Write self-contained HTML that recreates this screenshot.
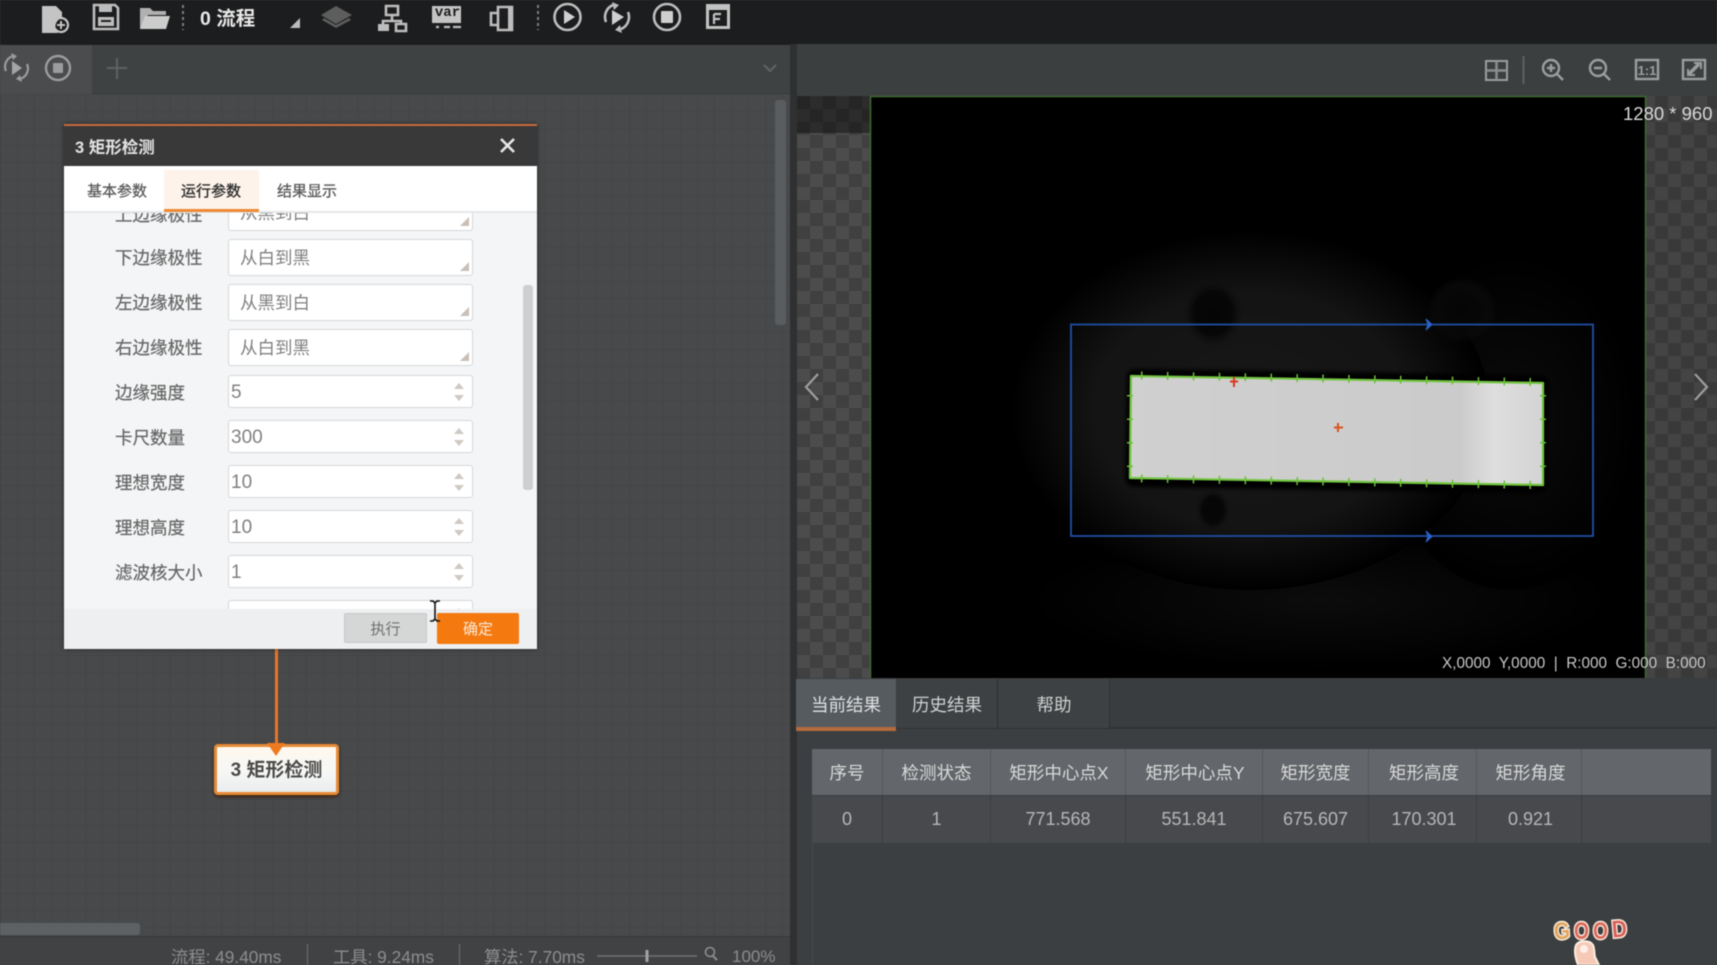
<!DOCTYPE html>
<html lang="zh"><head><meta charset="utf-8"><title>矩形检测</title>
<style>
*{box-sizing:border-box;margin:0;padding:0}
html,body{width:1717px;height:965px;overflow:hidden;background:#3c3f41}
body{font-family:"Liberation Sans","Noto Sans CJK SC",sans-serif;position:relative}
#root{position:absolute;left:0;top:0;width:1717px;height:965px;filter:blur(.5px);overflow:hidden}
.a{position:absolute;white-space:nowrap}
svg.a{overflow:visible}
.ic{fill:none;stroke:#bdbdbd;stroke-width:2.600}
.lb{left:115px;font-size:17.500px;line-height:24px;color:#666;width:90px;-webkit-text-stroke:.2px #666;margin-top:1px}
.inp{left:228px;width:245px;background:#fff;border:1px solid #d5d7d9;border-radius:3px;color:#808080;font-size:17.500px}
.sel{height:37px;padding:0 0 0 11px;line-height:36px}
.sel:after{content:"";position:absolute;right:3px;bottom:4px;width:0;height:0;border-left:9px solid transparent;border-bottom:9px solid #c9bfb8}
.sp{height:33px;padding-left:2px;line-height:34px;font-size:19px}
.sp:before,.sp:after{content:"";position:absolute;right:8px;width:0;height:0;border-left:5px solid transparent;border-right:5px solid transparent}
.sp:before{top:7px;border-bottom:6px solid #cfc9c4}
.sp:after{bottom:6px;border-top:6px solid #cfc9c4}
.th,.td{position:absolute;text-align:center;white-space:nowrap}
.th{top:749px;height:46px;line-height:48px;font-size:17.500px;color:#d9dadb;background:#63666a;border-right:1px solid #54575a}
.td{top:796px;height:47px;line-height:47px;font-size:18px;color:#b4b6b7;background:#47494c;border-right:1px solid #3d3f42}
.st{top:946px;font-size:17.300px;line-height:22px;color:#8b8d8e}
</style></head><body><div id="root">

<!-- left canvas -->
<div class="a" style="left:0;top:94px;width:790px;height:843px;background-color:#47494b;background-image:linear-gradient(#434547 1px,transparent 1px),linear-gradient(90deg,#434547 1px,transparent 1px);background-size:17px 17px"></div>

<!-- toolbar -->
<div class="a" style="left:0;top:0;width:1717px;height:44px;background:#1c1d1e;box-shadow:0 1px 2px #111"></div>
<svg class="a" style="left:0;top:0" width="800" height="44">
 <path d="M42 6h14l6 6v6a9 9 0 0 0-4 15H42z" fill="#c4c4c4"/><circle cx="61" cy="25" r="7" fill="none" stroke="#c4c4c4" stroke-width="2.200"/><path d="M57 25h8M61 21v8" stroke="#c4c4c4" stroke-width="2"/>
 <path d="M94 5h21l3 3v21H94z" class="ic"/><path d="M99 6h13v6H99z" fill="#bdbdbd"/><path d="M98 17h16v9H98z" fill="#bdbdbd"/><path d="M101 21h10" stroke="#222" stroke-width="2"/>
 <path d="M140 29V8h10l3 3h13v4h-18z" fill="#b0b0b0"/><path d="M145 16h25l-4 13h-26z" fill="#cccccc"/>
 <path d="M183 5v25M538 5v25" stroke="#7f7f7f" stroke-width="2" stroke-dasharray="3 3"/>
 <path d="M300 18v10h-10z" fill="#bcbcbc"/>
 <path d="M336 6l16 9-16 9-15-9z" fill="#5d5d5d"/><path d="M322 20l14 8 15-8-2-2-13 7-12-7z" fill="#5d5d5d"/>
 <path d="M386 6h12v9h-12zM392 15v6M383 24v-3h18v3" class="ic" stroke-width="2"/><path d="M378 24h11v7h-11z" fill="#bdbdbd"/><path d="M396 24h10v7h-10z" class="ic" stroke-width="2"/>
 <path d="M432 6h29v17h-29z" fill="#c4c4c4"/><path d="M436 27h3M444 27h6M453 27h8" stroke="#bdbdbd" stroke-width="2.200"/>
 <path d="M498 7h14v23h-14zM498 13h-7v12h7" class="ic"/><path d="M508 8h5v21h-5z" fill="#bdbdbd"/>
 <circle cx="567.500" cy="17" r="13" class="ic" stroke-width="3"/><path d="M564 10l11 7-11 7z" fill="#cfcfcf"/>
 <path d="M606 22a13 13 0 0 1 7-17M628 12a13 13 0 0 1-7 17" class="ic" stroke-width="3"/><path d="M612 2l7 3-5 5zM622 33l-7-3 5-5z" fill="#bdbdbd"/><path d="M612 10l12 7-12 8z" fill="#cfcfcf"/>
 <circle cx="667" cy="17" r="13" class="ic" stroke-width="3"/><rect x="661" y="11" width="12" height="12" rx="1" fill="#cfcfcf"/>
 <path d="M706 4h24v25h-24z" fill="#c2c2c2"/><path d="M709 10h18v16h-18z" fill="#1c1d1e"/><path d="M714 14h7M714 14v10M714 19h6" stroke="#c2c2c2" stroke-width="2.200" fill="none"/>
</svg>
<div class="a" style="left:200px;top:5px;font-size:19.500px;line-height:28px;font-weight:700;color:#e8e8e8">0 流程</div>
<div class="a" style="left:434px;top:5px;width:27px;text-align:center;font:700 14px/16px 'Liberation Mono',monospace;color:#1c1d1e">var</div>

<!-- left tab bar -->
<div class="a" style="left:0;top:45px;width:790px;height:49px;background:#3f4243;border-bottom:1px solid #383a3b"></div>
<div class="a" style="left:0;top:45px;width:92px;height:49px;background:#4a4c4d"></div>
<svg class="a" style="left:0;top:45px" width="790" height="49">
 <path d="M6 26a11 11 0 0 1 7-15M27 19a11 11 0 0 1-7 15" fill="none" stroke="#9a9c9d" stroke-width="2.200"/><path d="M11 8l6 3-4 4zM22 37l-6-3 4-4z" fill="#9a9c9d"/><path d="M12 16l10 7-10 7z" fill="#a3a5a6"/>
 <circle cx="58" cy="23" r="12" fill="none" stroke="#9a9c9d" stroke-width="2.400"/><rect x="53" y="18" width="10" height="10" rx="1" fill="#9a9c9d"/>
 <path d="M117 13v21M107 23h20" stroke="#5f6263" stroke-width="2"/>
 <path d="M764 20l6 6 6-6" fill="none" stroke="#606365" stroke-width="2"/>
</svg>

<!-- left scrollbars -->
<div class="a" style="left:775px;top:100px;width:11px;height:225px;background:#5a5d5f;border-radius:3px"></div>
<div class="a" style="left:0;top:923px;width:140px;height:12px;background:#5e6163;border-radius:0 3px 3px 0"></div>

<!-- connector & node -->
<div class="a" style="left:275px;top:648px;width:2.500px;height:100px;background:#e9762a"></div>
<div class="a" style="left:214px;top:744px;width:125px;height:51px;border:3px solid #e58a35;border-radius:4px;background:linear-gradient(#fff8ef,#f7f7f5 55%,#e9ecee);box-shadow:0 2px 3px rgba(60,25,0,.8);text-align:center;font-size:19px;line-height:47px;font-weight:700;color:#4a4a4a">3 矩形检测</div>
<svg class="a" style="left:267px;top:738px" width="18" height="18"><path d="M0 5h18l-9 13z" fill="#ee7a20"/></svg>

<!-- dialog -->
<div class="a" style="left:64px;top:124px;width:473px;height:525px;background:#f3f5f6;box-shadow:0 0 4px rgba(0,0,0,.5);overflow:hidden">
 <div class="a" style="left:0;top:0;width:473px;height:42px;background:#39393a;border-top:2px solid #c96a3a"></div>
 <div class="a" style="left:11px;top:12px;font-size:16.500px;line-height:24px;font-weight:700;color:#e4e4e4">3 矩形检测</div>
 <svg class="a" style="left:435px;top:13px" width="17" height="17"><path d="M2 2l13 13M15 2L2 15" stroke="#e6e6e6" stroke-width="2.600"/></svg>
 <div class="a" style="left:0;top:42px;width:473px;height:47px;background:#fff;border-bottom:2px solid #e6e7e8"></div>
 <div class="a" style="left:100px;top:46px;width:95px;height:42px;background:#fdf3ea;border-bottom:3px solid #ec8a35"></div>
 <div class="a" style="left:23px;top:57px;font-size:15px;line-height:21px;color:#5a5a5a;-webkit-text-stroke:.25px #5a5a5a">基本参数</div>
 <div class="a" style="left:117px;top:57px;font-size:15px;line-height:21px;color:#2e2e2e;-webkit-text-stroke:.35px #2e2e2e">运行参数</div>
 <div class="a" style="left:213px;top:57px;font-size:15px;line-height:21px;color:#5a5a5a;-webkit-text-stroke:.25px #5a5a5a">结果显示</div>
</div>

<!-- dialog content (clipped) -->
<div class="a" style="left:64px;top:213px;width:473px;height:396px;overflow:hidden;background:#f3f5f6">
 <div style="position:absolute;left:-64px;top:-213px;width:600px;height:700px">
  <div class="a lb" style="top:202px">上边缘极性</div><div class="a inp sel" style="top:194px">从黑到白</div>
  <div class="a lb" style="top:245px">下边缘极性</div><div class="a inp sel" style="top:239px">从白到黑</div>
  <div class="a lb" style="top:290px">左边缘极性</div><div class="a inp sel" style="top:284px">从黑到白</div>
  <div class="a lb" style="top:335px">右边缘极性</div><div class="a inp sel" style="top:329px">从白到黑</div>
  <div class="a lb" style="top:380px">边缘强度</div><div class="a inp sp" style="top:375px">5</div>
  <div class="a lb" style="top:425px">卡尺数量</div><div class="a inp sp" style="top:420px">300</div>
  <div class="a lb" style="top:470px">理想宽度</div><div class="a inp sp" style="top:465px">10</div>
  <div class="a lb" style="top:515px">理想高度</div><div class="a inp sp" style="top:510px">10</div>
  <div class="a lb" style="top:560px">滤波核大小</div><div class="a inp sp" style="top:555px">1</div>
  <div class="a inp sp" style="top:600px"></div>
 </div>
 <div class="a" style="left:459px;top:72px;width:10px;height:205px;background:#cdcfd0;border-radius:3px"></div>
</div>

<!-- dialog footer -->
<div class="a" style="left:64px;top:609px;width:473px;height:40px;background:#eeeff0"></div>
<div class="a" style="left:344px;top:613px;width:83px;height:30px;background:#d5d6d6;border:1px solid #c8c9c9;border-radius:2px;text-align:center;font-size:15px;line-height:31px;color:#6e6e6e">执行</div>
<div class="a" style="left:437px;top:613px;width:82px;height:31px;background:#f47a10;border-radius:2px;text-align:center;font-size:15px;line-height:33px;color:#fbe9d8">确定</div>
<svg class="a" style="left:428px;top:600px" width="14" height="22"><path d="M2 1h3l2 2 2-2h3M7 3v16M2 21h3l2-2 2 2h3" fill="none" stroke="#111" stroke-width="1.600"/></svg>

<!-- status bar -->
<div class="a" style="left:0;top:936px;width:790px;height:29px;background:#404244;border-top:1px solid #37393a"></div>
<div class="a st" style="left:171px">流程: 49.40ms</div>
<div class="a" style="left:307px;top:944px;width:1px;height:21px;background:#6f7172"></div>
<div class="a st" style="left:333px">工具: 9.24ms</div>
<div class="a" style="left:459px;top:944px;width:1px;height:21px;background:#6f7172"></div>
<div class="a st" style="left:484px">算法: 7.70ms</div>
<div class="a st" style="left:732px;font-size:17px">100%</div>
<svg class="a" style="left:595px;top:945px" width="135" height="20">
 <path d="M2 11h100" stroke="#6f7172" stroke-width="1.500"/><path d="M52 5v12" stroke="#a0a2a3" stroke-width="3"/>
 <circle cx="115" cy="7" r="4.500" fill="none" stroke="#8b8d8e" stroke-width="1.600"/><path d="M118 11l4 4" stroke="#8b8d8e" stroke-width="2"/>
</svg>

<!-- splitter & right base -->
<div class="a" style="left:790px;top:44px;width:7px;height:921px;background:#2e3031"></div>
<div class="a" style="left:797px;top:44px;width:920px;height:52px;background:#3c3f40"></div>
<svg class="a" style="left:1460px;top:44px" width="257" height="52">
 <g fill="none" stroke="#9c9e9e" stroke-width="2">
  <rect x="26" y="17" width="21" height="19"/><path d="M36.500 17v19M26 26.500h21" stroke="#8b8d8d" stroke-width="2.500"/>
  <path d="M63.500 12v28" stroke="#5e6061"/>
  <circle cx="91" cy="24" r="8" stroke-width="2.400"/><path d="M97 30l6 6" stroke-width="2.400"/><path d="M87 24h8M91 20v8" stroke-width="2.400"/>
  <circle cx="138" cy="24" r="8" stroke-width="2.400"/><path d="M144 30l6 6M134 24h8" stroke-width="2.400"/>
  <rect x="176" y="16" width="22" height="19" stroke-width="2.400"/>
  <rect x="223" y="16" width="22" height="19" stroke-width="2.400"/><path d="M229 30l10-10" stroke-width="3.500"/><path d="M234 19h7v6M228 25v6h7"/>
 </g>
 <text x="187" y="31" text-anchor="middle" font-family="Liberation Sans" font-size="13" font-weight="700" fill="#9c9e9e">1:1</text>
</svg>

<!-- checker -->
<div class="a" style="left:797px;top:96px;width:920px;height:582px;background-color:#404040;background-image:linear-gradient(45deg,#4c4c4c 25%,transparent 25%,transparent 75%,#4c4c4c 75%),linear-gradient(45deg,#4c4c4c 25%,transparent 25%,transparent 75%,#4c4c4c 75%);background-size:26px 26px;background-position:0 0,13px 13px"></div>
<div class="a" style="left:797px;top:96px;width:73px;height:37px;background:rgba(0,0,0,.42)"></div>
<div class="a" style="left:1645px;top:96px;width:72px;height:582px;background:rgba(0,0,0,.1)"></div>

<!-- image -->
<svg class="a" style="left:870px;top:96px" width="776" height="582" viewBox="870 96 776 582">
 <defs>
  <radialGradient id="r1"><stop offset="0" stop-color="#181818"/><stop offset=".65" stop-color="#141414"/><stop offset="1" stop-color="#000"/></radialGradient>
  <radialGradient id="r2"><stop offset="0" stop-color="#0c0c0c"/><stop offset="1" stop-color="#000"/></radialGradient>
  <radialGradient id="r3"><stop offset="0" stop-color="#050505"/><stop offset=".6" stop-color="#070707"/><stop offset="1" stop-color="#131313" stop-opacity="0"/></radialGradient>
  <filter id="b3" x="-10%" y="-20%" width="120%" height="140%"><feGaussianBlur stdDeviation="2"/></filter>
  <linearGradient id="g" x1="0" x2="1" y1="0" y2="0"><stop offset="0" stop-color="#d0d0d0"/><stop offset=".8" stop-color="#cbcbcb"/><stop offset=".88" stop-color="#dedede"/><stop offset="1" stop-color="#d4d4d4"/></linearGradient>
 </defs>
 <rect x="870" y="96" width="776" height="582" fill="#000"/>
 <ellipse cx="1320" cy="600" rx="300" ry="70" fill="url(#r2)"/>
 <ellipse cx="1510" cy="420" rx="130" ry="170" fill="url(#r2)"/>
 <ellipse cx="1250" cy="410" rx="240" ry="180" fill="url(#r1)"/>
 <ellipse cx="1213" cy="313" rx="32" ry="36" fill="url(#r3)"/>
 <ellipse cx="1462" cy="310" rx="34" ry="32" fill="url(#r3)"/>
 <ellipse cx="1213" cy="510" rx="18" ry="22" fill="url(#r3)"/>
 <rect x="1126" y="372" width="422" height="118" rx="8" fill="#000" filter="url(#b3)" transform="rotate(.9 1337 431)"/>
 <polygon points="1131,376 1543,383 1543,485 1130,478" fill="url(#g)" stroke="#72c640" stroke-width="2.200" stroke-linejoin="round"/>
 <g fill="none" stroke="#6cbf3c">
  <path d="M1141 375.500L1533 382" stroke-width="8" stroke-dasharray="1.500 24.400"/>
  <path d="M1141 478.500L1533 485" stroke-width="8" stroke-dasharray="1.500 24.400"/>
  <path d="M1130 395V478" stroke-width="6" stroke-dasharray="1.500 22"/>
  <path d="M1543 395V485" stroke-width="6" stroke-dasharray="1.500 22"/>
 </g>
 <g stroke-width="2" fill="none">
  <path d="M1234 377v10M1230 381.500h8" stroke="#d93a20"/>
  <path d="M1338 423v9M1334 427.500h9" stroke="#d9531f"/>
 </g>
 <path d="M1071 324.500H1593V536H1071z" fill="none" stroke="#1f4fa6" stroke-width="1.800"/>
 <path d="M1426 319l6 5.500-6 5.500 2-5.500zM1426 531l6 5.500-6 5.500 2-5.500z" fill="#2a62c8" stroke="#2a62c8"/>
 <path d="M870.500 678V96.500H1645.500V678" fill="none" stroke="#3f6a30" stroke-width="1.500"/>
</svg>

<div class="a" style="left:1623px;top:102px;font-size:18.500px;line-height:24px;color:#d8d8d8">1280 * 960</div>
<div class="a" style="left:1442px;top:654px;font-size:15.300px;line-height:20px;color:#c9c9c9">X,0000&nbsp; Y,0000&nbsp; |&nbsp; R:000&nbsp; G:000&nbsp; B:000</div>
<svg class="a" style="left:803px;top:372px" width="910" height="30" fill="none" stroke="#9e9e9e" stroke-width="2.200">
 <path d="M15 2L3 15l12 13"/><path d="M892 2l12 13-12 13"/>
</svg>

<!-- results -->
<div class="a" style="left:797px;top:678px;width:920px;height:287px;background:#3c3f41"></div>
<div class="a" style="left:797px;top:678px;width:920px;height:51px;background:#3a3d3f;border-bottom:2px solid #2f3133"></div>
<div class="a" style="left:796px;top:679px;width:100px;height:52px;background:#565b5f;border-bottom:4px solid #b56a3c;text-align:center;font-size:17.500px;line-height:53px;color:#dfe1e2">当前结果</div>
<div class="a" style="left:897px;top:679px;width:101px;height:49px;background:#3e4143;border-right:1px solid #2f3133;text-align:center;font-size:17.500px;line-height:53px;color:#d0d2d3">历史结果</div>
<div class="a" style="left:999px;top:679px;width:111px;height:49px;background:#3e4143;border-right:1px solid #2f3133;text-align:center;font-size:17.500px;line-height:53px;color:#d0d2d3">帮助</div>

<div class="th" style="left:812px;width:71px">序号</div>
<div class="th" style="left:883px;width:108px">检测状态</div>
<div class="th" style="left:991px;width:135px;padding-left:2px">矩形中心点X</div>
<div class="th" style="left:1126px;width:137px;padding-left:2px">矩形中心点Y</div>
<div class="th" style="left:1263px;width:106px">矩形宽度</div>
<div class="th" style="left:1369px;width:108px;padding-left:3px">矩形高度</div>
<div class="th" style="left:1477px;width:105px;padding-left:3px">矩形角度</div>
<div class="th" style="left:1582px;width:129px;border-right:0"></div>
<div class="td" style="left:812px;width:71px">0</div>
<div class="td" style="left:883px;width:108px">1</div>
<div class="td" style="left:991px;width:135px">771.568</div>
<div class="td" style="left:1126px;width:137px">551.841</div>
<div class="td" style="left:1263px;width:106px">675.607</div>
<div class="td" style="left:1369px;width:108px;padding-left:3px">170.301</div>
<div class="td" style="left:1477px;width:105px;padding-left:3px">0.921</div>
<div class="td" style="left:1582px;width:129px;border-right:0"></div>
<div class="a" style="left:812px;top:843px;width:1px;height:122px;background:#47494c"></div>

<!-- sticker -->
<svg class="a" style="left:1550px;top:912px" width="84" height="53">
 <g font-family="Liberation Sans" font-size="24" font-weight="700" stroke="#fbeee0" stroke-width="3" paint-order="stroke" lengthAdjust="spacingAndGlyphs">
  <text x="4" y="27" fill="#dfa65c" textLength="16" lengthAdjust="spacingAndGlyphs" transform="rotate(-4 12 20)">G</text>
  <text x="24" y="27" fill="#dc6a5c" textLength="15" lengthAdjust="spacingAndGlyphs">O</text>
  <text x="43" y="27" fill="#dc6a5c" textLength="15" lengthAdjust="spacingAndGlyphs">O</text>
  <text x="62" y="25" fill="#d9605a" textLength="15" lengthAdjust="spacingAndGlyphs" transform="rotate(-5 70 18)">D</text>
 </g>
 <path d="M28 53c-3-8-4-15-2-20 3-5 14-5 17 0 2 5 1 9 2 12l4 8z" fill="#f6c9b6" stroke="#fbeee0" stroke-width="2"/>
 <circle cx="34" cy="37" r="4" fill="#fdeee8"/>
</svg>

</div></body></html>
